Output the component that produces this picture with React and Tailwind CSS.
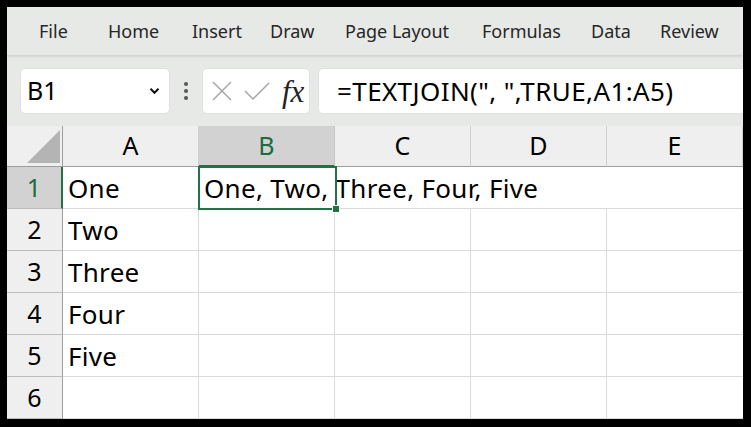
import React from "react";

const font = { fontFamily: '"Noto Sans", "Open Sans", sans-serif' };

const menu = [
  ["File", "w-[69px]"],
  ["Home", "w-[84px]"],
  ["Insert", "w-[78px]"],
  ["Draw", "w-[75px]"],
  ["Page Layout", "w-[137px]"],
  ["Formulas", "w-[109px]"],
  ["Data", "w-[69px]"],
  ["Review", "w-[70px]"],
];
const cols = ["A", "B", "C", "D", "E"];
const rowsA = ["One", "Two", "Three", "Four", "Five", ""];

export default function App() {
  return (
    <div className="w-[751px] h-[427px] bg-black pt-[7px] pl-[7px] pr-[8px] pb-[8px]" style={font}>
      <div className="w-[736px] h-[412px] flex flex-col bg-[#e6e9e6] overflow-hidden">
        {/* Menu */}
        <div className="h-[49px] flex items-center text-[18px] text-[#262626] border-b border-[#d2d5d2] shadow-[0_1px_2px_rgba(0,0,0,0.08)]">
          <div className="flex pl-[32px] whitespace-nowrap">
            {menu.map(([m, w]) => (
              <span key={m} className={w}>
                {m}
              </span>
            ))}
          </div>
        </div>
        {/* Formula bar */}
        <div className="h-[70px] flex items-center pl-[13px]">
          <div className="w-[150px] h-[46px] bg-white rounded-[5px] border border-[#e0e0e0] flex items-center justify-between pl-[6px] pr-[9px]">
            <span className="text-[25px] text-black">B1</span>
            <svg width="11" height="8" viewBox="0 0 11 8">
              <path d="M1.5 1.8 L5.5 5.8 L9.5 1.8" fill="none" stroke="#111" strokeWidth="2" />
            </svg>
          </div>
          <div className="w-[32px] flex flex-col items-center gap-[3px]">
            <span className="w-[4px] h-[4px] bg-[#555] rounded-full"></span>
            <span className="w-[4px] h-[4px] bg-[#555] rounded-full"></span>
            <span className="w-[4px] h-[4px] bg-[#555] rounded-full"></span>
          </div>
          <div className="w-[108px] h-[46px] bg-white rounded-[5px] border border-[#e0e0e0] flex items-center pl-[8px]">
            <svg width="22" height="22" viewBox="0 0 22 22">
              <path d="M2 2 L20 20 M20 2 L2 20" stroke="#a6a6a6" strokeWidth="1.5" />
            </svg>
            <svg width="26" height="22" viewBox="0 0 26 22" className="ml-[11px]">
              <path d="M1 11 L9 19 L25 3" fill="none" stroke="#a6a6a6" strokeWidth="1.5" />
            </svg>
            <span
              className="ml-[12px] text-[31px] italic text-[#222] leading-none"
              style={{ fontFamily: '"Liberation Serif", "DejaVu Serif", serif' }}
            >
              fx
            </span>
          </div>
          <div className="ml-[8px] flex-1 h-[46px] bg-white rounded-l-[5px] border border-r-0 border-[#e0e0e0] flex items-center pl-[18px]">
            <span className="text-[26px] tracking-[0.4px] text-black whitespace-nowrap">=TEXTJOIN(", ",TRUE,A1:A5)</span>
          </div>
        </div>
        {/* Grid */}
        <div className="relative flex-1 bg-white">
          <div className="grid grid-cols-[56px_136px_136px_136px_136px_136px] grid-rows-[41px_repeat(6,42px)]">
            {/* header row */}
            <div className="relative bg-[#efefef] border-r border-b border-[#9e9e9e]">
              <div
                className="absolute left-[20px] top-[4px] w-[33px] h-[33px] bg-[#b4b4b4]"
                style={{ clipPath: "polygon(100% 0, 100% 100%, 0 100%)" }}
              ></div>
            </div>
            {cols.map((c) => (
              <div
                key={c}
                className={
                  c === "B"
                    ? "bg-[#d2d2d2] border-r border-b-2 border-r-[#c6c6c6] border-b-[#217346] flex items-center justify-center text-[25px] text-[#1e6b3f]"
                    : "bg-[#efefef] border-r border-b border-r-[#d0d0d0] border-b-[#9e9e9e] flex items-center justify-center text-[25px] text-black"
                }
              >
                {c}
              </div>
            ))}
            {rowsA.map((a, i) => {
              const r = i + 1;
              const sel = r === 1;
              return (
                <React.Fragment key={r}>
                  <div
                    className={
                      sel
                        ? "bg-[#d2d2d2] border-r-2 border-b border-r-[#217346] border-b-[#bdbdbd] flex items-center justify-center text-[25px] text-[#1e6b3f]"
                        : "bg-[#efefef] border-r border-b border-r-[#9e9e9e] border-b-[#bdbdbd] flex items-center justify-center text-[25px] text-black"
                    }
                  >
                    {r}
                  </div>
                  <div className="border-r border-b border-[#dadada] flex items-center pl-[5px] pt-[2px] text-[26px] tracking-[0.3px] text-black">
                    {a}
                  </div>
                  <div
                    className={
                      sel
                        ? "relative z-10 border-b border-[#dadada] flex items-center pl-[5px] pt-[2px] text-[26px] tracking-[0.3px] text-black whitespace-nowrap overflow-visible"
                        : "border-r border-b border-[#dadada]"
                    }
                  >
                    {sel ? "One, Two, Three, Four, Five" : ""}
                  </div>
                  <div className={sel ? "border-b border-[#dadada]" : "border-r border-b border-[#dadada]"}></div>
                  <div className={sel ? "border-b border-[#dadada]" : "border-r border-b border-[#dadada]"}></div>
                  <div className="border-b border-[#dadada]"></div>
                </React.Fragment>
              );
            })}
          </div>
          {/* selection */}
          <div className="absolute left-[191px] top-[40px] w-[139px] h-[44px] border-2 border-[#217346] z-20 pointer-events-none">
            <div className="absolute right-[-5px] bottom-[-5px] w-[6px] h-[6px] bg-[#217346] border border-white box-content"></div>
          </div>
        </div>
      </div>
    </div>
  );
}
